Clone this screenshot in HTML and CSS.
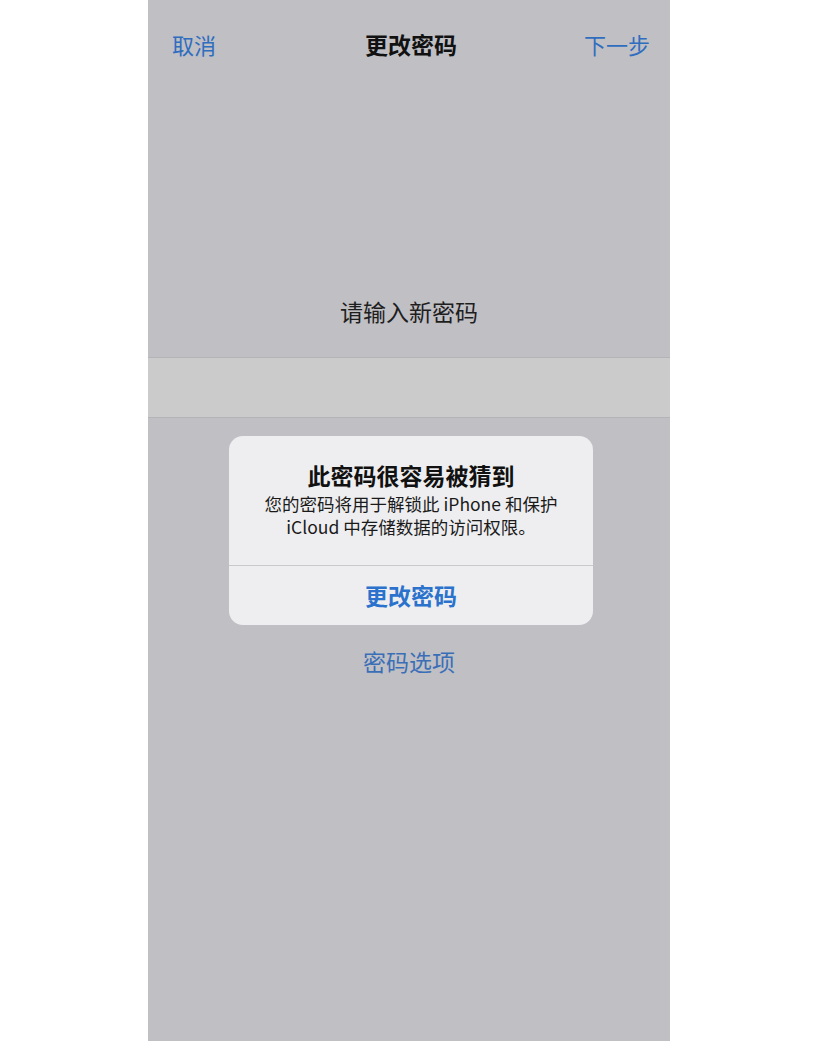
FILE: index.html
```html
<!DOCTYPE html>
<html lang="zh-CN">
<head>
<meta charset="utf-8">
<title>更改密码</title>
<link rel="stylesheet" href="styles.css">
</head>
<body>
<div class="screen">
  <header class="nav">
    <span class="nav-btn nav-left">取消</span>
    <span class="nav-title">更改密码</span>
    <span class="nav-btn nav-right">下一步</span>
  </header>
  <p class="prompt">请输入新密码</p>
  <div class="field"></div>
  <div class="alert-zone">
    <div class="alert">
      <div class="alert-body">
        <h2 class="alert-title">此密码很容易被猜到</h2>
        <p class="alert-msg">您的密码将用于解锁此 iPhone 和保护<br>iCloud 中存储数据的访问权限。</p>
      </div>
      <div class="alert-action">更改密码</div>
    </div>
  </div>
  <div class="options">密码选项</div>
</div>
</body>
</html>
```
FILE: styles.css
```css
html, body {
  margin: 0;
  padding: 0;
  background: #ffffff;
}

body {
  font-family: "Noto Sans CJK SC", "Noto Sans", sans-serif;
  height: 1041px;
  overflow: hidden;
}

.screen {
  margin-left: 148px;
  width: 522px;
  height: 1041px;
  background: #c0bfc4;
  display: flex;
  flex-direction: column;
}

.nav {
  height: 88px;
  padding: 0 20px 2px 24px;
  display: grid;
  grid-template-columns: 1fr auto 1fr;
  align-items: center;
}

.nav-btn {
  color: #2f6dbf;
  font-size: 22px;
}

.nav-left {
  justify-self: start;
}

.nav-right {
  justify-self: end;
}

.nav-title {
  color: #111;
  font-size: 23px;
  font-weight: 700;
}

.prompt {
  margin: 202px 0 0;
  height: 65px;
  text-align: center;
  font-size: 23px;
  line-height: 38px;
  color: #1e1e1e;
}

.field {
  height: 59px;
  background: #cbcbcb;
  border-top: 1px solid #b4b4b8;
  border-bottom: 1px solid #b4b4b8;
}

.alert-zone {
  display: flex;
  justify-content: center;
  padding-top: 18px;
}

.alert {
  width: 364px;
  margin-left: 4px;
  background: #eeeef0;
  border-radius: 14px;
  overflow: hidden;
}

.alert-body {
  padding: 24px 12px 27px;
  text-align: center;
}

.alert-title {
  margin: 0;
  font-size: 23px;
  line-height: 30px;
  font-weight: 700;
  color: #111;
}

.alert-msg {
  margin: 2px 0 0;
  font-size: 17.5px;
  line-height: 23px;
  color: #1a1a1a;
}

.alert-action {
  border-top: 1px solid #c9c9cc;
  height: 60px;
  padding-bottom: 2px;
  box-sizing: border-box;
  display: flex;
  align-items: center;
  justify-content: center;
  font-size: 23px;
  font-weight: 700;
  color: #2a72cc;
}

.options {
  margin-top: 21px;
  text-align: center;
  font-size: 23px;
  line-height: 30px;
  color: #3a6fb8;
}
```
